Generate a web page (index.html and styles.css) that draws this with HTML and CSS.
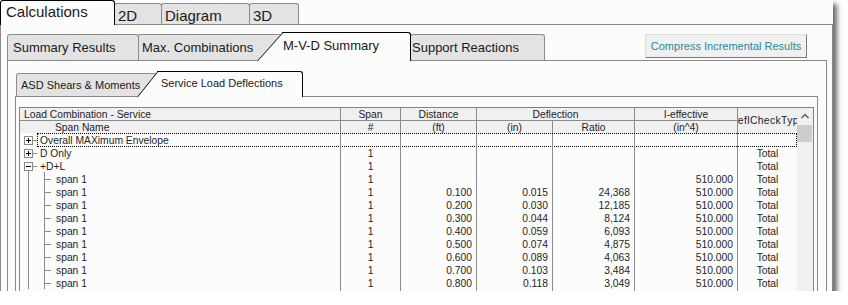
FILE: index.html
```html
<!DOCTYPE html>
<html lang="en">
<head>
    <meta charset="UTF-8">
    <title>Calculations - Service Load Deflections</title>
    <link rel="stylesheet" href="styles.css">
</head>
<body>

    <div class="window">

        <!-- Abas principais -->
        <div class="tabs top-tabs">
            <div class="tab active tab-calc">Calculations</div>
            <div class="tab tab-2d">2D</div>
            <div class="tab tab-diagram">Diagram</div>
            <div class="tab tab-3d">3D</div>
        </div>

        <div class="panel calc-panel">
            <div class="tabs sub-tabs">
                <div class="tab tab-summary">Summary Results</div>
                <div class="tab tab-max">Max. Combinations</div>
                <div class="tab active slant tab-mvd">M-V-D Summary</div>
                <div class="tab tab-support">Support Reactions</div>
                <button class="compress-btn">Compress Incremental Results</button>
            </div>

            <div class="panel mvd-panel">
                <div class="tabs inner-tabs">
                    <div class="tab tab-asd">ASD Shears &amp; Moments</div>
                    <div class="tab active slant tab-service">Service Load Deflections</div>
                </div>

                <div class="panel defl-panel">
                    <div class="grid">
                        <div class="grid-body">
                            <div class="grid-head">
                                <div class="top c1 left">Load Combination - Service</div>
                                <div class="top c2">Span</div>
                                <div class="top c3">Distance</div>
                                <div class="top c4">Deflection</div>
                                <div class="top c6">I-effective</div>
                                <div class="c7 check">DeflCheckType</div>
                                <div class="c1 left span-name">Span Name</div>
                                <div class="c2">#</div>
                                <div class="c3">(ft)</div>
                                <div class="c4b">(in)</div>
                                <div class="c5">Ratio</div>
                                <div class="c6">(in^4)</div>
                            </div>

                            <div class="row focus">
                                <div class="name"><svg width="20" height="13"><rect x="4.5" y="3.5" width="8" height="8" fill="#fcfcfc" stroke="#8a8a8a"/><path d="M6 7.5h5M8.5 5v5" stroke="#000"/><path d="M13 7.5h4" stroke="#8a8a8a"/></svg>Overall MAXimum Envelope</div>
                                <div></div><div></div><div></div><div></div><div></div><div></div>
                            </div>
                            <div class="row">
                                <div class="name"><svg width="20" height="13"><rect x="4.5" y="3.5" width="8" height="8" fill="#fcfcfc" stroke="#8a8a8a"/><path d="M6 7.5h5M8.5 5v5" stroke="#000"/><path d="M13 7.5h4" stroke="#8a8a8a"/></svg>D Only</div>
                                <div class="mid">1</div><div></div><div></div><div></div><div></div><div>Total</div>
                            </div>
                            <div class="row">
                                <div class="name"><svg width="20" height="13"><rect x="4.5" y="3.5" width="8" height="8" fill="#fcfcfc" stroke="#8a8a8a"/><path d="M6 7.5h5" stroke="#000"/><path d="M13 7.5h4M8.5 12v1" stroke="#8a8a8a"/></svg>+D+L</div>
                                <div class="mid">1</div><div></div><div></div><div></div><div></div><div>Total</div>
                            </div>
                            <div class="row">
                                <div class="name"><svg width="36" height="13"><path d="M8.5 0v13M24.5 0v13M25 7.5h6" stroke="#8a8a8a"/></svg>span 1</div>
                                <div class="mid">1</div><div></div><div></div><div></div><div>510.000</div><div>Total</div>
                            </div>
                            <div class="row">
                                <div class="name"><svg width="36" height="13"><path d="M8.5 0v13M24.5 0v13M25 7.5h6" stroke="#8a8a8a"/></svg>span 1</div>
                                <div class="mid">1</div><div>0.100</div><div>0.015</div><div>24,368</div><div>510.000</div><div>Total</div>
                            </div>
                            <div class="row">
                                <div class="name"><svg width="36" height="13"><path d="M8.5 0v13M24.5 0v13M25 7.5h6" stroke="#8a8a8a"/></svg>span 1</div>
                                <div class="mid">1</div><div>0.200</div><div>0.030</div><div>12,185</div><div>510.000</div><div>Total</div>
                            </div>
                            <div class="row">
                                <div class="name"><svg width="36" height="13"><path d="M8.5 0v13M24.5 0v13M25 7.5h6" stroke="#8a8a8a"/></svg>span 1</div>
                                <div class="mid">1</div><div>0.300</div><div>0.044</div><div>8,124</div><div>510.000</div><div>Total</div>
                            </div>
                            <div class="row">
                                <div class="name"><svg width="36" height="13"><path d="M8.5 0v13M24.5 0v13M25 7.5h6" stroke="#8a8a8a"/></svg>span 1</div>
                                <div class="mid">1</div><div>0.400</div><div>0.059</div><div>6,093</div><div>510.000</div><div>Total</div>
                            </div>
                            <div class="row">
                                <div class="name"><svg width="36" height="13"><path d="M8.5 0v13M24.5 0v13M25 7.5h6" stroke="#8a8a8a"/></svg>span 1</div>
                                <div class="mid">1</div><div>0.500</div><div>0.074</div><div>4,875</div><div>510.000</div><div>Total</div>
                            </div>
                            <div class="row">
                                <div class="name"><svg width="36" height="13"><path d="M8.5 0v13M24.5 0v13M25 7.5h6" stroke="#8a8a8a"/></svg>span 1</div>
                                <div class="mid">1</div><div>0.600</div><div>0.089</div><div>4,063</div><div>510.000</div><div>Total</div>
                            </div>
                            <div class="row">
                                <div class="name"><svg width="36" height="13"><path d="M8.5 0v13M24.5 0v13M25 7.5h6" stroke="#8a8a8a"/></svg>span 1</div>
                                <div class="mid">1</div><div>0.700</div><div>0.103</div><div>3,484</div><div>510.000</div><div>Total</div>
                            </div>
                            <div class="row">
                                <div class="name"><svg width="36" height="13"><path d="M8.5 0v13M24.5 0v13M25 7.5h6" stroke="#8a8a8a"/></svg>span 1</div>
                                <div class="mid">1</div><div>0.800</div><div>0.118</div><div>3,049</div><div>510.000</div><div>Total</div>
                            </div>
                        </div>

                        <!-- Barra de rolagem -->
                        <div class="vscroll">
                            <svg width="16" height="17"><path d="M4.5 10 L8 6.5 L11.5 10" fill="none" stroke="#606060" stroke-width="1.5"/></svg>
                            <div class="thumb"></div>
                        </div>
                    </div>
                </div>
            </div>
        </div>
    </div>

</body>
</html>
```

FILE: styles.css
```css
* {
    margin: 0;
    padding: 0;
    box-sizing: border-box;
}

body {
    background-color: #ffffff;
    font-family: "Liberation Sans", Arial, sans-serif;
    color: #1e1e1e;
}

.window {
    width: 833px;
    height: 291px;
    background-color: #fcfcfc;
    box-shadow: 4px 4px 5px rgba(0, 0, 0, 0.6);
    overflow: hidden;
    display: flex;
    flex-direction: column;
}

/* Abas */
.tabs {
    display: flex;
    align-items: flex-end;
    border-bottom: 1px solid #898989;
    flex: none;
}

.tab {
    position: relative;
    flex: none;
    margin-left: -1px;
    background-color: #e3e3e3;
    border: 1px solid #8c8c8c;
    border-bottom: none;
    border-radius: 3px 3px 0 0;
    white-space: nowrap;
    color: #1a1a1a;
}

.tab:first-child {
    margin-left: 0;
}

.tab.active {
    background-color: #fcfcfc;
    border-color: #000;
    margin-bottom: -1px;
    z-index: 2;
}

.tab.slant {
    margin-left: 0;
    border-left: none;
    border-top-left-radius: 0;
}

.tab.slant::before {
    content: "";
    position: absolute;
    top: 0;
    bottom: 0;
    background-color: #fcfcfc;
    border-left: 1px solid #000;
    transform-origin: bottom left;
    z-index: -1;
}

/* Nivel 1 */
.top-tabs {
    height: 25px;
}

.top-tabs .tab {
    height: 21px;
    font-size: 15px;
    line-height: 24px;
    padding-left: 3px;
}

.top-tabs .tab.active {
    height: 25px;
    line-height: 22px;
    padding-left: 5px;
}

.tab-calc { width: 115px; }
.tab-2d { width: 48px; }
.tab-diagram { width: 89px; }
.tab-3d { width: 50px; }

.panel {
    flex: 1;
    display: flex;
    flex-direction: column;
    border-left: 1px solid #898989;
    border-right: 1px solid #898989;
}

.calc-panel {
    padding: 7px 5px 0 6px;
}

/* Nivel 2 */
.sub-tabs {
    height: 29px;
}

.sub-tabs .tab {
    height: 26px;
    font-size: 13px;
    line-height: 25px;
    padding-left: 5px;
}

.sub-tabs .tab.active {
    height: 29px;
    line-height: 25px;
    padding-left: 1px;
}

.sub-tabs .tab.slant::before {
    left: -25px;
    width: 28px;
    transform: skewX(-41.8deg);
}

.sub-tabs .tab-summary { width: 132px; }
.sub-tabs .tab-max { width: 144px; padding-left: 3px; }
.sub-tabs .tab-mvd { width: 129px; }
.sub-tabs .tab-support { width: 135px; padding-left: 1px; }

.compress-btn {
    align-self: flex-start;
    margin: 2px 20px 0 auto;
    width: 162px;
    height: 24px;
    font-family: "Liberation Sans", Arial, sans-serif;
    font-size: 11px;
    color: #1f8a99;
    background-color: #f0f0f0;
    border: 1px solid;
    border-color: #dcdcdc #7a7a7a #7a7a7a #dcdcdc;
}

.mvd-panel {
    padding: 10px 8px 0 7px;
}

/* Nivel 3 */
.inner-tabs {
    height: 26px;
}

.inner-tabs .tab {
    height: 23px;
    font-size: 11px;
    line-height: 22px;
    padding-left: 4px;
}

.inner-tabs .tab.active {
    height: 26px;
    line-height: 23px;
    padding-left: 4px;
}

.inner-tabs .tab.slant::before {
    left: -20px;
    width: 24px;
    transform: skewX(-38.7deg);
}

.inner-tabs .tab-asd {
    width: 141px;
    margin-left: 1px;
}

.tab-service { width: 146px; }

.defl-panel {
    padding: 10px 3px 0 3px;
}

/* Grade */
.grid {
    display: flex;
    border: 1px solid #828282;
    border-bottom: none;
    flex: 1;
}

.grid-body {
    width: 777px;
    font-size: 10.3px;
}

.grid-head {
    display: grid;
    grid-template-columns: 321px 60px 76px 76px 82px 103px 59px;
    grid-template-rows: 13px 12px;
    background-color: #f0f0f0;
    color: #1c1c28;
    line-height: 12px;
}

.grid-head > div {
    border-right: 1px solid #8c8c8c;
    padding-top: 1px;
    text-align: center;
    white-space: nowrap;
}

.grid-head .top {
    border-bottom: 1px solid #8c8c8c;
}

.grid-head .left {
    text-align: left;
    padding-left: 4px;
}

.grid-head .span-name {
    padding-left: 35px;
}

.grid-head .c1 { grid-column: 1; }
.grid-head .c2 { grid-column: 2; }
.grid-head .c3 { grid-column: 3; }
.grid-head .c4 { grid-column: 4 / 6; }
.grid-head .c4b { grid-column: 4; }
.grid-head .c5 { grid-column: 5; }
.grid-head .c6 { grid-column: 6; }

.grid-head .check {
    grid-column: 7;
    grid-row: 1 / 3;
    border-right: none;
    padding-top: 0;
    overflow: hidden;
    letter-spacing: 0.4px;
    display: flex;
    align-items: center;
    justify-content: center;
}

.row {
    position: relative;
    display: grid;
    grid-template-columns: 321px 60px 76px 76px 82px 103px 59px;
    height: 13px;
    line-height: 15px;
}

.row > div {
    border-right: 1px solid #8c8c8c;
    padding: 0 4px;
    text-align: right;
    white-space: nowrap;
}

.row > div:last-child {
    border-right: none;
    text-align: center;
    padding: 0;
}

.row > .name {
    display: flex;
    align-items: flex-start;
    padding: 0;
    text-align: left;
}

.row > .name svg {
    flex: none;
    display: block;
}

.row > .mid {
    text-align: center;
    padding: 0;
}

.row.focus::after {
    content: "";
    position: absolute;
    left: 17px;
    right: 0;
    top: 0;
    bottom: -1px;
    border: 1px dotted #000;
}

/* Barra de rolagem */
.vscroll {
    width: 16px;
    background-color: #f0f0f0;
}

.vscroll svg {
    display: block;
}

.vscroll .thumb {
    height: 17px;
    width: 15px;
    background-color: #cdcdcd;
}
```
